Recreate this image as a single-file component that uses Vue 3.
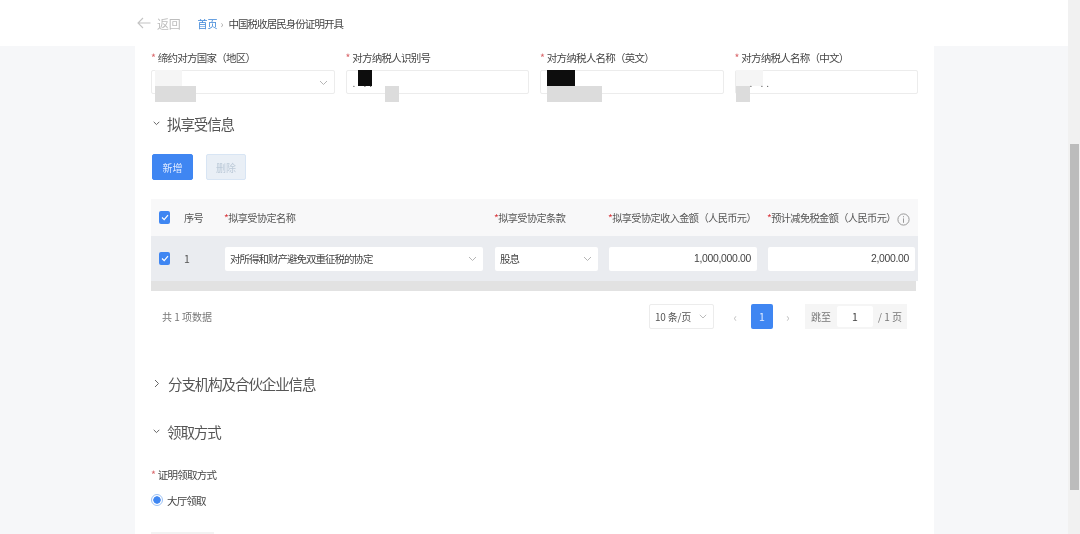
<template>
  <div class="page">
    <div class="main">
      <!-- HEADER -->
      <header class="top-bar">
        <svg class="back-icon" width="14" height="12" viewBox="0 0 14 12">
          <path d="M13.5 6H1M6 1 1 6l5 5" fill="none" stroke="#c4c4c4" stroke-width="1.1" />
        </svg>
        <span class="back-text">返回</span>
        <span class="crumb-link">首页</span>
        <span class="crumb-sep">›</span>
        <span class="crumb-current">中国税收居民身份证明开具</span>
      </header>

      <div class="body">
        <section class="content">
          <!-- FIELDS -->
          <div class="fields">
            <div v-for="field in fields" :key="field.label" class="field">
              <label class="field-label"><i class="star">*</i> {{ field.label }}</label>
              <div class="input-box">
                <svg v-if="field.select" class="chevron" width="9" height="6" viewBox="0 0 9 6">
                  <path d="M1 1l3.5 3.5L8 1" fill="none" stroke="#b5b5b5" />
                </svg>
                <span
                  v-for="(mask, i) in field.masks"
                  :key="i"
                  class="mask"
                  :class="mask.type"
                  :style="{ left: mask.x + 'px', width: mask.w + 'px' }"
                ></span>
                <span v-if="field.dots" class="dots" :style="{ left: field.dots + 'px' }">. ..</span>
              </div>
            </div>
          </div>

          <!-- ENJOY INFO -->
          <h3 class="section-title first">
            <svg width="7" height="5" viewBox="0 0 7 5"><path d="M.7.8 3.5 3.6 6.3.8" fill="none" stroke="#666" /></svg>
            拟享受信息
          </h3>

          <div class="actions">
            <button class="btn primary">新增</button>
            <button class="btn disabled">删除</button>
          </div>

          <!-- TABLE -->
          <div class="table">
            <div class="table-row head">
              <div class="cell"><span class="checkbox"><svg width="8" height="7" viewBox="0 0 8 7"><path d="M1 3.5 3.2 5.6 7 1.2" fill="none" stroke="#fff" stroke-width="1.2" /></svg></span></div>
              <div class="cell">序号</div>
              <div v-for="col in columns" :key="col" class="cell"><i class="star strong">*</i>{{ col }}</div>
              <svg class="info-icon" width="13" height="13" viewBox="0 0 13 13">
                <circle cx="6.5" cy="6.5" r="5.6" fill="none" stroke="#999" />
                <path d="M6.5 5.4v4.4M6.5 3.2v1.1" stroke="#999" />
              </svg>
            </div>
            <div class="table-row body-row">
              <div class="cell"><span class="checkbox"><svg width="8" height="7" viewBox="0 0 8 7"><path d="M1 3.5 3.2 5.6 7 1.2" fill="none" stroke="#fff" stroke-width="1.2" /></svg></span></div>
              <div class="cell index">1</div>
              <div class="cell"><div class="cell-input w-name">对所得和财产避免双重征税的协定
                <svg width="9" height="6" viewBox="0 0 9 6"><path d="M1 1l3.5 3.5L8 1" fill="none" stroke="#b5b5b5" /></svg></div></div>
              <div class="cell"><div class="cell-input w-term">股息
                <svg width="9" height="6" viewBox="0 0 9 6"><path d="M1 1l3.5 3.5L8 1" fill="none" stroke="#b5b5b5" /></svg></div></div>
              <div class="cell"><div class="cell-input num w-income">1,000,000.00</div></div>
              <div class="cell"><div class="cell-input num">2,000.00</div></div>
            </div>
            <div class="table-scroll"></div>
          </div>

          <!-- PAGINATION -->
          <div class="pagination">
            <span class="total">共 1 项数据</span>
            <div class="page-size">10 条/页
              <svg width="8" height="5" viewBox="0 0 8 5"><path d="M.8.8 4 4 7.2.8" fill="none" stroke="#bbb" /></svg>
            </div>
            <span class="page-arrow left">‹</span>
            <span class="page-num">1</span>
            <span class="page-arrow right">›</span>
            <div class="jump">跳至<span class="jump-input">1</span>/ 1 页</div>
          </div>

          <h3 class="section-title branch">
            <svg width="6" height="9" viewBox="0 0 6 9"><path d="M1 1l3.5 3.5L1 8" fill="none" stroke="#666" /></svg>
            分支机构及合伙企业信息
          </h3>

          <h3 class="section-title pickup">
            <svg width="7" height="5" viewBox="0 0 7 5"><path d="M.7.8 3.5 3.6 6.3.8" fill="none" stroke="#666" /></svg>
            领取方式
          </h3>

          <label class="field-label method"><i class="star">*</i> 证明领取方式</label>
          <div class="radio-row"><span class="radio"></span>大厅领取</div>
          <div class="cut-line"></div>
        </section>
      </div>
    </div>

    <div class="scrollbar"><div class="thumb"></div></div>
  </div>
</template>

<script setup>
const fields = [
  {
    label: "缔约对方国家（地区）",
    select: true,
    masks: [
      { type: "light", x: 3, w: 27 },
      { type: "gray", x: 3, w: 41 },
    ],
  },
  {
    label: "对方纳税人识别号",
    dots: 6,
    masks: [
      { type: "black", x: 11, w: 14 },
      { type: "gray", x: 38, w: 14 },
    ],
  },
  {
    label: "对方纳税人名称（英文）",
    masks: [
      { type: "black", x: 6, w: 28 },
      { type: "gray", x: 6, w: 55 },
    ],
  },
  {
    label: "对方纳税人名称（中文）",
    dots: 14,
    masks: [
      { type: "light", x: 0, w: 27 },
      { type: "gray", x: 0, w: 14 },
    ],
  },
];

const columns = [
  "拟享受协定名称",
  "拟享受协定条款",
  "拟享受协定收入金额（人民币元）",
  "预计减免税金额（人民币元）",
];
</script>

<style>
html,
body {
  margin: 0;
  overflow: hidden;
}
</style>

<style scoped>
.page {
  display: flex;
  width: 1080px;
  height: 534px;
  overflow: hidden;
  background: #f6f7f9;
  font-family: "Noto Sans CJK SC", "Liberation Sans", sans-serif;
  font-size: 10px;
  color: #444;
  filter: blur(0.45px);
}

.main {
  flex: 1;
  min-width: 0;
}

/* HEADER */

.top-bar {
  display: flex;
  align-items: center;
  height: 46px;
  padding: 0 0 0 137px;
  box-sizing: border-box;
  background: #fff;
}

.back-text {
  margin-left: 6px;
  font-size: 12px;
  letter-spacing: -0.3px;
  color: #bdbdbd;
}

.crumb-link {
  margin-left: 17px;
  color: #3d86d8;
}

.crumb-sep {
  margin: 0 5px 0 3px;
  color: #aaa;
}

.crumb-current {
  font-size: 10.5px;
  letter-spacing: -0.95px;
  color: #444;
}

/* CONTENT */

.body {
  padding-left: 135px;
}

.content {
  width: 767px;
  height: 488px;
  padding: 5px 16px 0;
  background: #fff;
}

.fields {
  display: grid;
  grid-template-columns: repeat(4, 1fr);
  gap: 11px;
}

.field-label {
  display: block;
  height: 14px;
  line-height: 14px;
  font-size: 10.5px;
  letter-spacing: -0.75px;
  color: #444;
}

.field-label .star {
  margin-right: 1px;
}

.star {
  font-style: normal;
  color: #d9666a;
}

.star.strong {
  color: #d9343a;
}

.input-box {
  position: relative;
  height: 24px;
  margin-top: 5px;
  background: #fff;
  border: 1px solid #ececec;
  border-radius: 2px;
  box-sizing: border-box;
}

.chevron {
  position: absolute;
  top: 9px;
  right: 6px;
}

.mask {
  position: absolute;
}

.mask.light {
  top: -1px;
  height: 16px;
  background: #f5f5f5;
}

.mask.black {
  top: -1px;
  height: 16px;
  background: #0d0d0d;
}

.mask.gray {
  top: 15px;
  height: 16px;
  background: #dcdcdc;
}

.dots {
  position: absolute;
  top: 6px;
  font-size: 10px;
  line-height: 12px;
  letter-spacing: 3px;
  color: #555;
}

.section-title {
  display: flex;
  align-items: center;
  gap: 7px;
  height: 20px;
  margin: 0;
  font-size: 14.5px;
  letter-spacing: -1.1px;
  font-weight: 400;
  color: #555;
}

.section-title.first {
  margin-top: 19px;
}

.section-title.branch {
  margin-top: 44px;
}

.section-title.branch {
  gap: 6px;
}

.section-title.branch svg {
  margin: 0 2px 0 3px;
}

.section-title.pickup {
  margin-top: 28px;
}

.section-title svg {
  margin-left: 2px;
}

.actions {
  display: flex;
  gap: 14px;
  margin: 21px 0 0 1px;
}

.btn {
  width: 41px;
  height: 26px;
  padding: 0;
  border-radius: 2px;
  font-family: inherit;
  font-size: 10px;
}

.btn.primary {
  background: #3f86f2;
  border: 1px solid #3f86f2;
  color: #dfeaff;
}

.btn.disabled {
  width: 40px;
  margin-left: -1px;
  background: #e9eff6;
  border: 1px solid #d8e5f4;
  color: #bccad8;
}

/* TABLE */

.table {
  position: relative;
  margin-top: 19px;
}

.table-row {
  position: relative;
  display: grid;
  grid-template-columns: 33px 41px 270px 114px 159px 150px;
}

.cell {
  display: flex;
  align-items: center;
  font-size: 10.2px;
  letter-spacing: -0.6px;
  color: #555;
}

.head {
  grid-template-columns: 33px 40px 270px 114px 159px 151px;
  height: 37px;
  background: #f8f8f9;
}

.head .cell:first-child,
.body-row .cell:first-child {
  padding-left: 8px;
}

.info-icon {
  position: absolute;
  top: 14px;
  right: 8px;
}

.body-row {
  height: 45px;
  background: #eaecf0;
}

.index {
  font-size: 10.5px;
}

.checkbox {
  display: flex;
  align-items: center;
  justify-content: center;
  width: 11px;
  height: 13px;
  background: #3f86f2;
  border-radius: 2px;
}

.cell-input {
  display: flex;
  align-items: center;
  justify-content: space-between;
  height: 24px;
  padding: 0 6px 0 5px;
  box-sizing: border-box;
  background: #fff;
  border-radius: 2px;
  font-size: 10.5px;
  letter-spacing: -1px;
  color: #444;
}

.w-name {
  width: 258px;
}

.w-term {
  width: 103px;
}

.num {
  justify-content: flex-end;
  width: 147px;
  font-family: "Liberation Sans", sans-serif;
  font-size: 10.4px;
  letter-spacing: -0.3px;
  padding-right: 6px;
}

.w-income {
  width: 148px;
}

.table-scroll {
  width: 765px;
  height: 10px;
  background: #e2e2e2;
}

/* PAGINATION */

.pagination {
  display: flex;
  align-items: center;
  height: 25px;
  margin-top: 13px;
}

.total {
  margin-left: 11px;
  color: #777;
  width: 487px;
}

.page-size {
  display: flex;
  align-items: center;
  justify-content: space-between;
  width: 65px;
  height: 25px;
  padding: 0 6px 0 5px;
  box-sizing: border-box;
  border: 1px solid #ececec;
  border-radius: 2px;
  color: #555;
  letter-spacing: -0.2px;
}

.page-arrow {
  box-sizing: border-box;
  font-size: 12px;
  color: #c4c4c4;
}

.page-arrow.left {
  width: 37px;
  text-align: right;
  padding-right: 14px;
}

.page-arrow.right {
  width: 38px;
  padding-left: 13px;
}

.page-num {
  width: 22px;
  height: 25px;
  line-height: 25px;
  text-align: center;
  background: #3f86f2;
  border-radius: 2px;
  color: #dfeaff;
  font-size: 10.5px;
}

.jump {
  display: flex;
  align-items: center;
  width: 102px;
  height: 25px;
  margin-left: -6px;
  padding-left: 6px;
  box-sizing: border-box;
  background: #f5f5f5;
  color: #777;
}

.jump-input {
  width: 36px;
  height: 21px;
  margin: 0 5px 0 6px;
  line-height: 21px;
  text-align: center;
  background: #fff;
  border-radius: 2px;
  color: #444;
  font-size: 10.5px;
}

/* PICKUP */

.method {
  margin-top: 27px;
}

.radio-row {
  display: flex;
  align-items: center;
  gap: 4px;
  height: 16px;
  margin-top: 10px;
  font-size: 10.5px;
  letter-spacing: -0.8px;
  color: #444;
}

.radio {
  width: 10px;
  height: 10px;
  border: 1px solid #9cc2f5;
  border-radius: 50%;
  background: radial-gradient(circle, #3f86f2 0 3.4px, #fff 4px);
}

.cut-line {
  width: 63px;
  height: 2px;
  margin-top: 24px;
  background: #f3f3f3;
}

/* SCROLLBAR */

.scrollbar {
  width: 12px;
  padding: 144px 1px 0 2px;
  box-sizing: border-box;
  background: #f1f1f1;
}

.thumb {
  height: 346px;
  background: #bcbcbc;
}
</style>
